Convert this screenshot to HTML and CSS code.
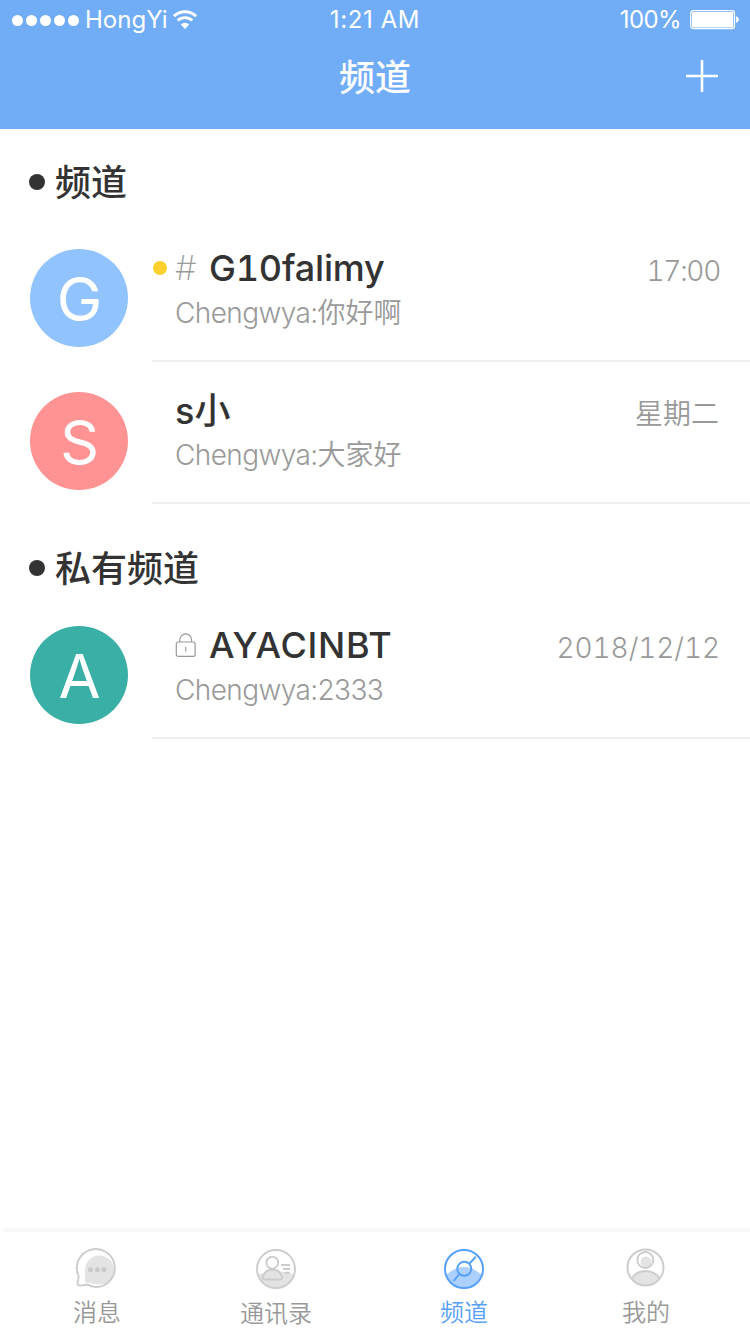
FILE: index.html
```html
<!DOCTYPE html>
<html lang="zh-CN">
<head>
<meta charset="utf-8">
<title>频道</title>
<link rel="stylesheet" href="styles.css">
</head>
<body>
<div class="app">
  <header class="header">
    <div class="status">
      <div class="carrier">
        <span class="signal"><i></i><i></i><i></i><i></i><i></i></span>
        <span class="carrier-name">HongYi</span>
        <svg class="wifi" width="24" height="20" viewBox="0 0 24 20">
          <path d="M1 6.200a16 16 0 0 1 22 0" fill="none" stroke="#fff" stroke-width="3"/>
          <path d="M4.700 10.600a10.600 10.600 0 0 1 14.600 0" fill="none" stroke="#fff" stroke-width="2.800"/>
          <path d="M12 19l-4.200-4.600a6.200 6.200 0 0 1 8.400 0z" fill="#fff"/>
        </svg>
      </div>
      <span class="clock">1:21 AM</span>
      <div class="power">
        <span class="percent">100%</span>
        <svg width="50" height="20" viewBox="0 0 50 20">
          <rect x=".7" y=".7" width="43.8" height="18" rx="2.6" fill="none" stroke="#fff" stroke-width="1.2"/>
          <rect x="2" y="2" width="41.2" height="15.4" rx="1.2" fill="#fff"/>
          <path d="M46 6.3c1.8.6 2.9 1.7 2.9 3.3s-1.100 2.800-2.900 3.400z" fill="#fff"/>
        </svg>
      </div>
    </div>
    <div class="nav">
      <h1 class="nav-title">频道</h1>
      <svg class="add" width="32" height="32" viewBox="0 0 32 32"><path d="M16 1v30M1 16h30" stroke="#fff" stroke-width="2.6" stroke-linecap="round"/></svg>
    </div>
  </header>

  <main class="content">
    <h2 class="section section-first">频道</h2>
    <article class="row">
      <div class="avatar blue">G</div>
      <div class="body">
        <div class="text">
          <div class="name"><i class="unread"></i><span class="hash">#</span><span class="n-g">G10falimy</span></div>
          <div class="message"><span>Chengwya:</span>你好啊</div>
        </div>
        <time class="time t-hour">17:00</time>
      </div>
    </article>
    <article class="row row-second">
      <div class="avatar pink">S</div>
      <div class="body">
        <div class="text">
          <div class="name"><span class="n-s">s小</span></div>
          <div class="message"><span>Chengwya:</span>大家好</div>
        </div>
        <time class="time">星期二</time>
      </div>
    </article>
    <h2 class="section section-private">私有频道</h2>
    <article class="row">
      <div class="avatar green">A</div>
      <div class="body">
        <div class="text">
          <div class="name"><svg class="kind" width="21" height="28" viewBox="0 0 21 28"><g fill="none" stroke="#999" stroke-width="1.200"><rect x="1.300" y="11" width="18.800" height="14.400" rx="2"/><path d="M4.800 11V8.800a5.900 5.900 0 0 1 11.800 0V11M10.700 16v4.500"/></g></svg><span class="n-a">AYACINBT</span></div>
          <div class="message"><span>Chengwya:2333</span></div>
        </div>
        <time class="time t-date">2018/12/12</time>
      </div>
    </article>
  </main>

  <nav class="tabs">
    <a class="tab tab-chat">
      <svg width="42" height="42" viewBox="0 0 42 42"><path d="M10 35V23a14.500 14.500 0 1 1 14.500 14.500c-5 0-8-1.500-14.500-2.500z" fill="#e3e3e3"/><path d="M2.500 36.500C2.500 34 3.600 32 3.600 29A19 19 0 1 1 21 40c-4 0-6.500-1.200-8.500-2.600-2.500 1-5 1.200-7.500 1.200-1.500 0-2.500-.8-2.500-2.100z" fill="none" stroke="#ccc" stroke-width="1.900"/><g fill="#c9c9c9"><circle cx="15.500" cy="22.700" r="2.500"/><circle cx="22.300" cy="22.700" r="2.500"/><circle cx="29" cy="22.700" r="2.500"/></g></svg>
      <span>消息</span>
    </a>
    <a class="tab tab-contacts">
      <svg width="42" height="42" viewBox="0 0 42 42"><path d="M2.600 27Q21 19.500 39.400 27A19 19 0 0 1 2.600 27z" fill="#e3e3e3"/><g fill="none" stroke="#ccc" stroke-width="1.900"><circle cx="21" cy="21" r="19"/><circle cx="17.300" cy="14.700" r="5.900"/><path d="M10 31.500c-2 0-2.600-1.200-2-3.300 1.200-4.200 4.500-6.500 9.400-6.500s8.200 2.300 9.400 6.500c.6 2.100 0 3.300-2 3.300z" fill="#e3e3e3"/><path d="M26 17h9M28 21h7M29.500 24.700h5.500"/></g></svg>
      <span>通讯录</span>
    </a>
    <a class="tab tab-channel active">
      <svg width="42" height="42" viewBox="0 0 42 42"><path d="M3.200 27C10 21 15 19 21 19s11 2 17.800 8A19 19 0 0 1 3.200 27z" fill="#acd1ff"/><g fill="none" stroke="#57a0f8" stroke-width="2"><circle cx="21" cy="21" r="19"/><circle cx="21.300" cy="20.800" r="7"/><path d="M26.300 15.800L32.800 8.800M16.300 25.800L10.700 33"/></g></svg>
      <span>频道</span>
    </a>
    <a class="tab tab-me">
      <svg width="42" height="42" viewBox="0 0 42 42"><path d="M6.500 31.500C10 26 15 24 20.500 24s10.500 2 14.500 7.500a18 18 0 0 1-28.500 0z" fill="#e3e3e3"/><circle cx="21" cy="15" r="5.500" fill="#e3e3e3"/><g fill="none" stroke="#ccc" stroke-width="1.900"><circle cx="20.500" cy="20.500" r="18"/><circle cx="20.300" cy="13" r="8"/><path d="M6.500 31.500C10 26 15 24 20.500 24s10.500 2 14.500 7.500"/></g></svg>
      <span>我的</span>
    </a>
  </nav>
</div>
</body>
</html>
```
FILE: styles.css
```css
* { box-sizing: border-box; margin: 0; padding: 0; }
body { background: #fff; font-family: Inter, "Noto Sans CJK SC", sans-serif; }
.app { width: 750px; height: 1334px; display: flex; flex-direction: column; }

.header { height: 129px; background: #71acf6; color: #fff; }
.status { height: 40px; display: grid; grid-template-columns: 1fr auto 1fr; font-size: 24px; line-height: 40px; }
.carrier { display: flex; align-items: center; padding-left: 12px; }
.signal { display: flex; gap: 3px; }
.signal i { width: 11px; height: 11px; border-radius: 50%; background: #fff; }
.carrier-name { margin-left: 6px; width: 82px; }
.wifi { margin-left: 6px; }
.clock { letter-spacing: .6px; }
.power { display: flex; align-items: center; justify-content: flex-end; padding-right: 10px; gap: 9px; }
.percent { letter-spacing: -.6px; }
.nav { height: 76px; display: grid; grid-template-columns: 1fr auto 1fr; align-items: center; }
.nav-title { grid-column: 2; font-size: 36px; font-weight: 500; line-height: 76px; }
.add { justify-self: end; margin-right: 32px; margin-bottom: 4px; }

.content { flex: 1; }
.section { display: flex; align-items: center; gap: 10px; padding-left: 29px; color: #333; font-size: 36px; font-weight: 500; line-height: 54px; }
.section::before { content: ""; width: 16px; height: 16px; margin-bottom: 2px; border-radius: 50%; background: #333; }
.section-first { height: 91px; padding-top: 17px; }
.section-private { height: 93px; padding-top: 37px; }
.row { height: 142px; display: flex; padding: 29px 0 0 30px; }
.row-second { padding-top: 30px; }
.avatar { width: 98px; height: 98px; border-radius: 50%; color: #fff; font-size: 61px; font-weight: 420; line-height: 100px; text-align: center; padding-left: 1px; }
.blue { background: #91c3ff; }
.pink { background: #ff9292; }
.green { background: #3aafa6; }
.body { margin-left: 24px; flex: 1; display: flex; justify-content: space-between; border-bottom: 2px solid #efefef; padding: 0 31px 0 23px; }
.name { position: relative; display: flex; align-items: center; height: 38px; color: #333; font-size: 36px; font-weight: 500; line-height: 38px; }
.kind { margin-right: 13px; }
.hash { width: 34px; color: #999; font-size: 34px; font-weight: 250; }
.n-g { font-weight: 460; font-variant-numeric: tabular-nums; letter-spacing: -.2px; }
.n-a { font-weight: 460; letter-spacing: .7px; }
.unread { position: absolute; left: -22px; top: 12px; width: 14px; height: 14px; border-radius: 50%; background: #ffd02e; }
.message { color: #999; font-size: 28px; font-weight: 350; line-height: 40px; margin-top: 6px; white-space: nowrap; }
.message span { letter-spacing: -.6px; }
.row-second .message { margin-top: 5px; }
.time { color: #999; font-size: 28px; font-weight: 350; line-height: 44px; font-variant-numeric: tabular-nums; }
.t-hour { letter-spacing: -1.3px; padding-right: 0; margin-right: -1px; }
.t-date { letter-spacing: -.1px; margin-right: -1px; }

.tabs { height: 106px; border-top: 4px solid #f8f8f8; margin-left: 4px; display: flex; color: #999; font-size: 24px; font-weight: 350; }
.tab { display: flex; flex-direction: column; align-items: center; padding-top: 15px; line-height: 34px; width: 184px; }
.tab span { margin-top: 7px; }
.tab-chat span { padding-left: 2px; }
.tab-contacts { width: 176px; padding-top: 16px; }
.tab-channel { width: 200px; padding-top: 16px; }
.tab-channel span { margin-top: 6px; }
.tab-me { width: 163px; }
.tab-me span { padding-left: 1px; }
.active { color: #57a0f8; }
```
